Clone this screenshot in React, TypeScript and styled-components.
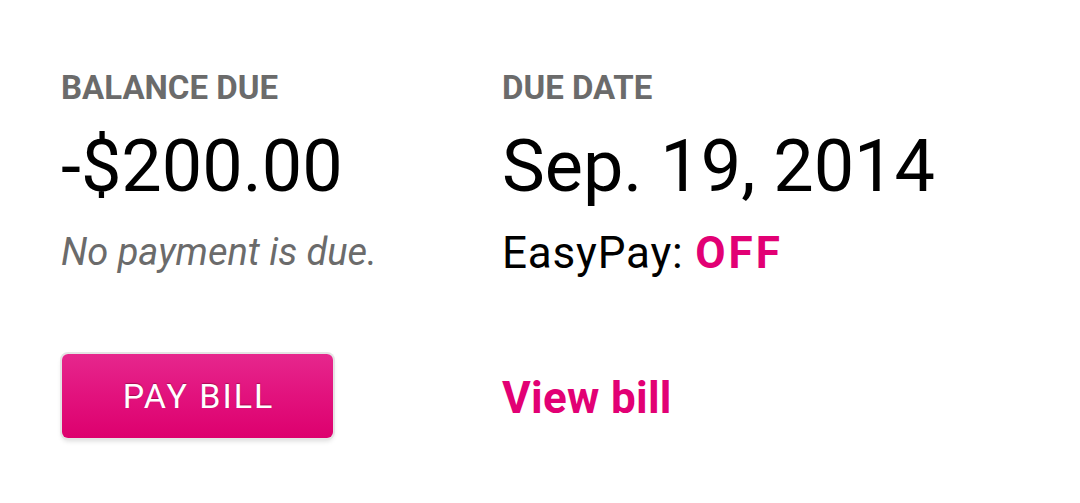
import React from 'react';
import styled, { createGlobalStyle } from 'styled-components';

const PINK = '#e20074';

const GlobalStyle = createGlobalStyle`
    html, body {
        margin: 0;
        padding: 0;
        background: #ffffff;
        font-family: Roboto, 'Noto Sans', Arial, sans-serif;
    }
`;

const App: React.FC = () => {
    return (
        <>
            <GlobalStyle />
            <Root>
                <Column>
                    <Label>BALANCE DUE</Label>
                    <BigValue>-$200.00</BigValue>
                    <Note>No payment is due.</Note>
                    <PayButton>PAY BILL</PayButton>
                </Column>
                <Column>
                    <Label>DUE DATE</Label>
                    <BigValue>Sep. 19, 2014</BigValue>
                    <Status>
                        EasyPay: <Strong>OFF</Strong>
                    </Status>
                    <Link href="#">View bill</Link>
                </Column>
            </Root>
        </>
    );
};

const Root = styled.div`
    display: grid;
    grid-template-columns: 441px 1fr;
    padding: 71px 0 0 61px;
    width: 1080px;
    height: 503px;
    box-sizing: border-box;
    background: #fff;
`;

const Column = styled.div`
    display: flex;
    flex-direction: column;
    align-items: flex-start;
`;

const Label = styled.div`
    font-size: 33px;
    line-height: 33px;
    font-weight: 700;
    color: #6b6b6b;
`;

const BigValue = styled.div`
    margin-top: 27px;
    font-size: 72px;
    line-height: 72px;
    font-weight: 400;
    color: #000;
`;

const Note = styled.div`
    margin-top: 30px;
    font-size: 38px;
    line-height: 38px;
    font-style: italic;
    color: #6b6b6b;
`;

const Status = styled.div`
    margin-top: 28px;
    font-size: 44px;
    line-height: 44px;
    letter-spacing: 0.8px;
    color: #000;
`;

const Strong = styled.span`
    font-weight: 700;
    letter-spacing: 3px;
    color: ${PINK};
`;

const PayButton = styled.button`
    margin-top: 83px;
    margin-left: 1px;
    width: 271px;
    height: 84px;
    border: none;
    border-radius: 6px;
    background: linear-gradient(to bottom, #e6278d 0%, #e2127d 50%, #dd006e 100%);
    box-shadow: 0 0 0 2px #e4e4e4, 0 3px 5px rgba(0, 0, 0, 0.15);
    color: #fff;
    font-family: inherit;
    font-size: 34px;
    font-weight: 400;
    letter-spacing: 2px;
    text-shadow: 0 -1px 1px rgba(120, 0, 50, 0.55);
    cursor: pointer;
    padding: 0 0 0 2px;
`;

const Link = styled.a`
    margin-top: 101px;
    font-size: 44px;
    line-height: 44px;
    font-weight: 700;
    letter-spacing: 0.3px;
    color: ${PINK};
    text-decoration: none;
`;

export default App;
